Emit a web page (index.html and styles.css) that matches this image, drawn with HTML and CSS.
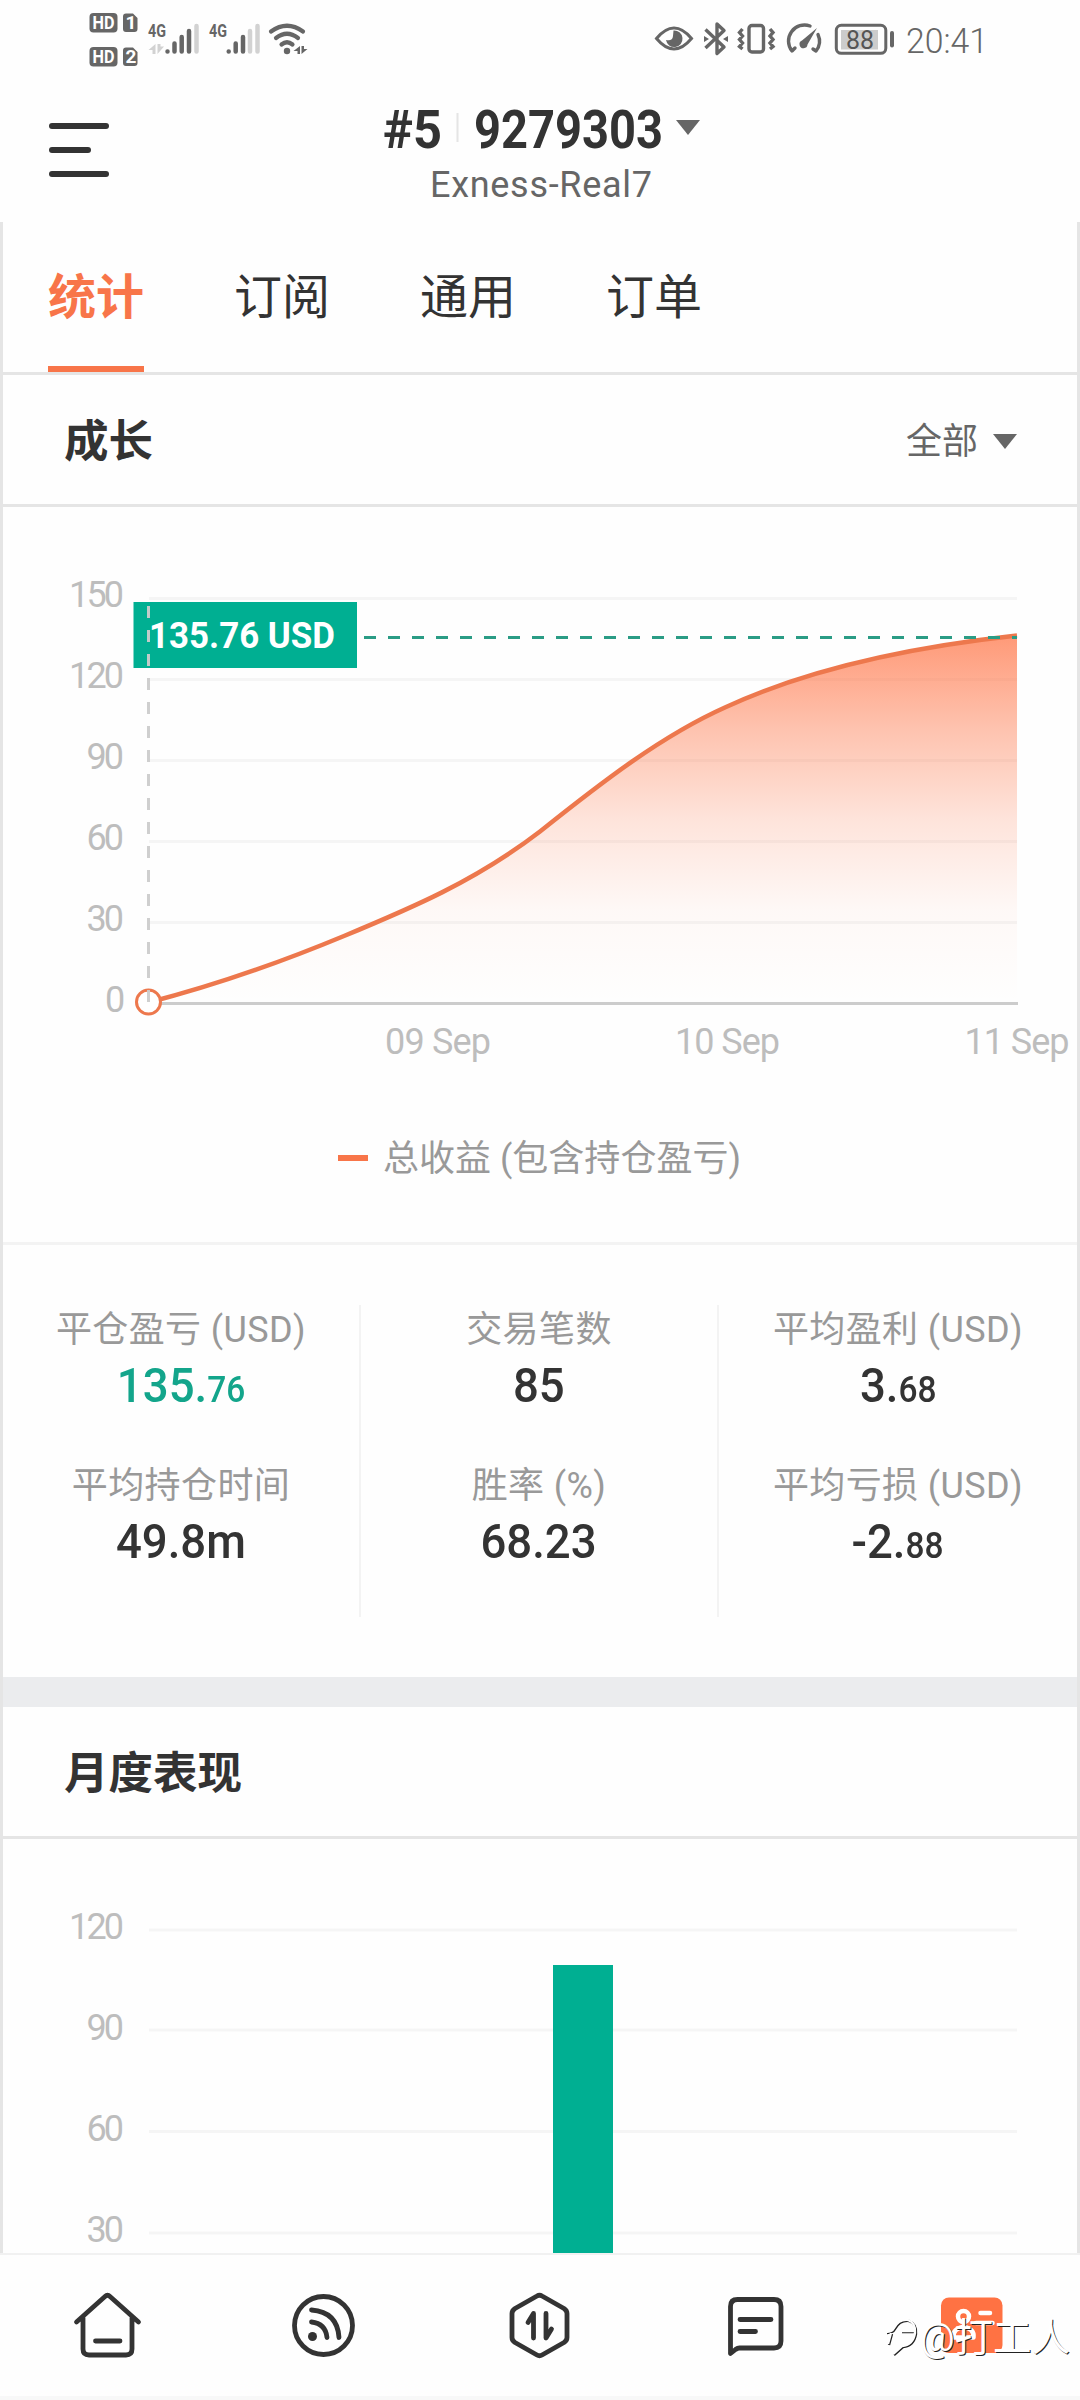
FILE: index.html
```html
<!DOCTYPE html>
<html lang="zh-CN">
<head>
<meta charset="utf-8">
<title>9279303</title>
<link rel="stylesheet" href="styles.css">
</head>
<body>
<div class="app">
  <div class="status">
    <svg class="status-left" width="250" height="80" viewBox="80 0 250 80">
      <g fill="#666">
        <rect x="89.500" y="13" width="28" height="19.500" rx="4"/>
        <rect x="89.500" y="47" width="28" height="19.500" rx="4"/>
        <path d="M126 13.500h7l4.500 4.500v11q0 3-3 3h-8.500q-3 0-3-3v-12.500q0-3 3-3zM126 47.500h7l4.500 4.500v11q0 3-3 3h-8.500q-3 0-3-3v-12.500q0-3 3-3z"/>
      </g>
      <g class="badge-text">
        <text x="92.500" y="29" textLength="22" lengthAdjust="spacingAndGlyphs">HD</text>
        <text x="92.500" y="63" textLength="22" lengthAdjust="spacingAndGlyphs">HD</text>
        <text x="125.500" y="29">1</text>
        <text x="125.500" y="63">2</text>
      </g>
      <g class="net-text">
        <text x="148" y="37" textLength="18" lengthAdjust="spacingAndGlyphs">4G</text>
        <text x="209" y="37" textLength="18" lengthAdjust="spacingAndGlyphs">4G</text>
      </g>
      <g stroke="#666" stroke-width="4.500" stroke-linecap="round">
        <path d="M167.500 51.500v.1M174.500 43.500v8M181.700 37v14.500M189 31v20.500M228.700 51.500v.1M235.700 43.500v8M243 37v14.500"/>
        <path stroke="#d2d2d2" d="M196.500 26v25.500M250 31v20.500M257.500 26v25.500"/>
      </g>
      <path fill="#d2d2d2" d="M155.500 44v10h-3v-4h-4zM157.500 44h3v2.500h3.500l-6.500 7.500z"/>
      <g fill="none" stroke="#666" stroke-width="4.200" stroke-linecap="round">
        <path d="M271 31.500q16-11.500 32 0M276 38q11-8.500 22 0M281.500 44.500q5.500-4.500 11 0"/>
      </g>
      <circle cx="287" cy="51" r="3.200" fill="#666"/>
      <path fill="#666" d="M300 46v8h-2.500v-3h-4zM301.500 46h2.500v3h3.500l-6 5z"/>
    </svg>
    <svg class="status-right" width="345" height="80" viewBox="650 0 345 80">
      <path d="M656.500 38.500q17.500-21 35 0q-17.500 21-35 0z" fill="none" stroke="#666" stroke-width="3"/>
      <path d="M673.500 30.500a8.300 8.300 0 1 1-7.500 9.500q6.500 1.500 7-4z" fill="#666"/>
      <path d="M705.500 29.500l18.500 17.500-7 6.500v-29.500l7 6.500-18.500 17.500" fill="none" stroke="#666" stroke-width="3.400" stroke-linejoin="round"/>
      <path d="M704 36l5 3-5 3zM728 36l-5 3 5 3z" fill="#666"/>
      <rect x="749" y="25.500" width="14.500" height="26.500" rx="3" fill="none" stroke="#666" stroke-width="3.400"/>
      <path d="M742.500 29l-3 3.500 3 3.500-3 3.500 3 3.500-3 3.500 3 2.500M770 29l3 3.500-3 3.500 3 3.500-3 3.500 3 3.500-3 2.500" fill="none" stroke="#666" stroke-width="3.400"/>
      <path d="M810 26a16 16 0 0 0-18 25l3-3M818 34.500a16 16 0 0 1-2 16.500l-3-2" fill="none" stroke="#666" stroke-width="3.400" stroke-linecap="round" stroke-linejoin="round"/>
      <path d="M817 28l-9.500 16.500a4 4 0 1 1-5.500-4z" fill="#666"/>
      <rect x="836.300" y="25.300" width="49.500" height="28" rx="5" fill="none" stroke="#666" stroke-width="3"/>
      <rect x="841" y="30" width="37" height="19.500" fill="#ccc"/>
      <rect x="890" y="31" width="4" height="16.500" rx="2" fill="#666"/>
      <text class="battery-text" x="846" y="49" textLength="28" lengthAdjust="spacingAndGlyphs">88</text>
      <text class="clock" x="906" y="53" textLength="82" lengthAdjust="spacingAndGlyphs">20:41</text>
    </svg>
  </div>

  <header class="header">
    <div class="menu"><i></i><i class="short"></i><i></i></div>
    <svg class="account" width="340" height="110" viewBox="370 95 340 110">
      <text class="account-id" x="383" y="148" textLength="59" lengthAdjust="spacingAndGlyphs">#5</text>
      <path d="M457.500 113v29" stroke="#e5e5e5" stroke-width="2"/>
      <text class="account-id" x="474" y="148" textLength="189" lengthAdjust="spacingAndGlyphs">9279303</text>
      <path d="M676 120h24l-12 15z" fill="#666"/>
      <text class="server" x="430" y="197" textLength="222" lengthAdjust="spacing">Exness-Real7</text>
    </svg>
  </header>

  <main class="content">
    <nav class="tabs">
      <span class="tab active">统计</span><span class="tab">订阅</span><span class="tab">通用</span><span class="tab">订单</span>
    </nav>

    <div class="section-title growth">
      <h2>成长</h2>
      <div class="filter"><span>全部</span><svg width="24" height="15" viewBox="0 0 24 15"><path d="M0 0h24l-12 15z" fill="#666"/></svg></div>
    </div>

    <svg class="chart" width="1074" height="735" viewBox="3 507 1074 735">
      <defs>
        <linearGradient id="area" x1="0" y1="635" x2="0" y2="1003" gradientUnits="userSpaceOnUse">
          <stop offset="0" stop-color="#ff7243" stop-opacity=".72"/>
          <stop offset=".25" stop-color="#ff7243" stop-opacity=".43"/>
          <stop offset=".5" stop-color="#ff7243" stop-opacity=".19"/>
          <stop offset=".75" stop-color="#ff7243" stop-opacity=".04"/>
          <stop offset="1" stop-color="#ff7243" stop-opacity="0"/>
        </linearGradient>
      </defs>
      <path d="M149 598.500h868M149 679.500h868M149 760.500h868M149 841.500h868M149 922.500h868" stroke="#f5f5f5" stroke-width="3"/>
      <path d="M149 1003.500h869" stroke="#ccc" stroke-width="3"/>
      <g class="axis y">
        <text x="69" y="607" textLength="55">150</text>
        <text x="69" y="688" textLength="55">120</text>
        <text x="86.500" y="769" textLength="37.500">90</text>
        <text x="86.500" y="850" textLength="37.500">60</text>
        <text x="86.500" y="931" textLength="37.500">30</text>
        <text x="105" y="1012">0</text>
      </g>
      <path d="M148.500 1002.500C213.500 985.800 279 963 344 936S475 881.500 540 831.500C602 782 662 735.500 726 707C815 666 920 646 1017 635.500V1002z" fill="url(#area)"/>
      <path d="M148.500 1002.500C213.500 985.800 279 963 344 936S475 881.500 540 831.500C602 782 662 735.500 726 707C815 666 920 646 1017 635.500" fill="none" stroke="#ed784d" stroke-width="4.500"/>
      <path d="M364 637.500h653" stroke="#2a9c85" stroke-width="3" stroke-dasharray="12 12"/>
      <rect x="133.500" y="602" width="223.500" height="66" fill="#00af92"/>
      <text class="tip" x="149" y="648" textLength="186" lengthAdjust="spacingAndGlyphs">135.76 USD</text>
      <circle cx="148.500" cy="1002" r="12" fill="#fff" stroke="#ed784d" stroke-width="3"/>
      <path d="M148.500 606v396" stroke="#ccc" stroke-opacity=".95" stroke-width="3" stroke-dasharray="12 12"/>
      <g class="axis">
        <text x="385" y="1054" textLength="106">09 Sep</text>
        <text x="675" y="1054" textLength="105">10 Sep</text>
        <text x="964.500" y="1054" textLength="105">11 Sep</text>
      </g>
      <path d="M338 1158h30" stroke="#f87549" stroke-width="6"/>
      <text class="legend" x="383" y="1171" textLength="358">总收益 (包含持仓盈亏)</text>
    </svg>

    <section class="stats">
      <div class="stat-col">
        <div class="stat"><span class="label">平仓盈亏 (USD)</span><span class="value green">135.<small>76</small></span></div>
        <div class="stat"><span class="label">平均持仓时间</span><span class="value">49.8m</span></div>
      </div>
      <div class="stat-col">
        <div class="stat"><span class="label">交易笔数</span><span class="value">85</span></div>
        <div class="stat"><span class="label">胜率 (%)</span><span class="value">68.23</span></div>
      </div>
      <div class="stat-col">
        <div class="stat"><span class="label">平均盈利 (USD)</span><span class="value">3.<small>68</small></span></div>
        <div class="stat"><span class="label">平均亏损 (USD)</span><span class="value">-2.<small>88</small></span></div>
      </div>
    </section>

    <div class="band"></div>

    <div class="section-title monthly"><h2>月度表现</h2></div>

    <svg class="chart" width="1074" height="414" viewBox="3 1839 1074 414">
      <path d="M149 1930h868M149 2030h868M149 2131.500h868M149 2233h868" stroke="#f5f5f5" stroke-width="3"/>
      <rect x="553" y="1965" width="60" height="288" fill="#00af92"/>
      <g class="axis y">
        <text x="69" y="1939" textLength="55">120</text>
        <text x="86.500" y="2040" textLength="37.500">90</text>
        <text x="86.500" y="2141" textLength="37.500">60</text>
        <text x="86.500" y="2242" textLength="37.500">30</text>
      </g>
    </svg>
  </main>

  <nav class="bottom">
    <svg class="icon" viewBox="68 2285 80 80"><path d="M76.500 2322l28.500-25.500q2.500-2.500 5 0l28.500 25.500M83 2318v31q0 6 6 6h37q6 0 6-6v-31M95.500 2341h24.500"/></svg>
    <svg class="icon" viewBox="284 2285 80 80"><circle cx="323.500" cy="2325.500" r="29"/><path d="M311.500 2310q26 2 27.500 27.500M311.500 2322q14 1.500 15.500 15.500"/><circle class="solid" cx="312.500" cy="2336.500" r="4.500"/></svg>
    <svg class="icon" viewBox="500 2285 80 80"><path d="M537 2296q2.500-1.500 5 0l22 12.500q3 2 3 5v24q0 3-3 5l-22 12.500q-2.500 1.500-5 0l-22-12.500q-3-2-3-5v-24q0-3 3-5z"/><path d="M533.500 2338v-24.500l-5.500 9M546 2313.500v24.500l5.500-9"/></svg>
    <svg class="icon" viewBox="716 2285 80 80"><path d="M730.500 2353.500v-47q0-7 7-7h36.500q7 0 7 7v34.500q0 7-7 7h-34.500q-2 0-4 1.500z"/><path d="M740 2319.500h31M740 2331.500h15.500"/></svg>
    <svg class="icon" viewBox="932 2285 80 80"><rect class="card" x="941" y="2297.500" width="61.500" height="55.500" rx="8"/><g class="white"><circle cx="963.500" cy="2316.500" r="5.500"/><path d="M980.500 2313h9.500M976 2323h16.500M953.500 2337.500q-1-9 10-10.500 11 1.500 10 10.500z"/></g></svg>
    <div class="watermark">
      <svg width="36" height="46" viewBox="884 2320 36 46"><g fill="none" stroke-width="2.400"><path d="M886 2337q6 0 8-4 5-9 14-8 8 3 7 13-2 12-13 13l-9 8M901 2336h14M891 2338l-3 11"/></g></svg><span>@打工人</span>
    </div>
  </nav>
  <div class="foot"></div>
</div>
</body>
</html>
```
FILE: styles.css
```css
* { box-sizing: border-box; }
body {
  margin: 0;
  background: #fefefe;
  color: #333;
  font-family: Roboto, "Noto Sans CJK SC", sans-serif;
}
svg { display: block; }
.app {
  width: 1080px;
  height: 2400px;
  overflow: hidden;
  display: flex;
  flex-direction: column;
}

/* system status bar */
.status {
  height: 80px;
  padding: 0 85px 0 80px;
  display: flex;
  justify-content: space-between;
}
.badge-text text { fill: #fff; font-size: 19px; font-weight: 700; }
.net-text text { fill: #666; font-size: 18.5px; font-weight: 700; }
.battery-text { fill: #555; font-size: 26px; }
.clock { fill: #666; font-size: 35px; font-weight: 350; }

/* account header */
.header {
  height: 142px;
  display: flex;
  padding: 15px 0 0 49px;
}
.menu {
  width: 60px;
  margin: 28px 261px 0 0;
  display: flex;
  flex-direction: column;
  gap: 18px;
}
.menu i { height: 6px; border-radius: 3px; background: #333; }
.menu .short { width: 42px; }
.account-id { fill: #333; font-size: 53px; font-weight: 700; }
.server { fill: #666; font-size: 36px; }

.content {
  height: 2031px;
  border: solid #e5e5e5;
  border-width: 0 3px;
}

.tabs {
  height: 153px;
  padding-left: 45px;
  display: flex;
  gap: 90px;
  border-bottom: 3px solid #e5e5e5;
  font-size: 48px;
}
.tab { line-height: 148px; height: 150px; padding-top: 2px; }
.tab.active {
  color: #f87549;
  font-weight: 700;
  border-bottom: 6px solid #f87549;
}

.section-title {
  height: 132px;
  padding: 4px 60px 0 61px;
  display: flex;
  align-items: center;
  justify-content: space-between;
  border-bottom: 3px solid #e5e5e5;
}
h2 { margin: 0; font-size: 44.5px; line-height: 60px; font-weight: 700; color: #333; }
.filter {
  display: flex;
  align-items: center;
  gap: 15px;
  font-size: 36px;
  line-height: 60px;
  color: #666;
}

.axis text { fill: #bdbdbd; font-size: 36px; }
.tip { fill: #fff; font-size: 37px; font-weight: 700; }
.legend { fill: #999; font-size: 36px; }

.stats {
  height: 435px;
  padding-top: 60px;
  border-top: 3px solid #f3f3f3;
  display: grid;
  grid-template-columns: repeat(3, 1fr);
}
.stat-col { height: 312px; border-right: 2px solid #f3f3f3; }
.stat-col:last-child { border-right: 0; }
.stat {
  height: 156px;
  display: flex;
  flex-direction: column;
  align-items: center;
}
.label { font-size: 36px; line-height: 50px; letter-spacing: .4px; color: #999; }
.value { font-size: 49px; line-height: 62px; font-weight: 500; transform: scaleX(.93); }
.value small { font-size: 36px; }
.green { color: #13a58b; }

.band { height: 30px; background: #ebecee; }

/* bottom navigation */
.bottom {
  position: relative;
  height: 143px;
  border-top: 2px solid #f1f1f1;
  display: flex;
  justify-content: space-around;
  padding-top: 30px;
}
.icon { width: 80px; height: 80px; }
.icon path, .icon circle {
  fill: none;
  stroke: #333;
  stroke-width: 4.8;
  stroke-linecap: round;
  stroke-linejoin: round;
}
.icon .solid { fill: #333; stroke: none; }
.icon .card { fill: #ff7243; }
.icon .white path, .icon .white circle { stroke: #fff; stroke-width: 4.5; }
.watermark {
  position: absolute;
  left: 884px;
  top: 60px;
  display: flex;
  color: #fff;
  font-size: 38.5px;
  line-height: 46px;
  white-space: nowrap;
  text-shadow: 1px 1px 0 #222;
}
.watermark svg { stroke: #fefefe; filter: drop-shadow(1px 1px 0 #222); }
.foot { height: 4px; background: #f8f8f8; }
```
